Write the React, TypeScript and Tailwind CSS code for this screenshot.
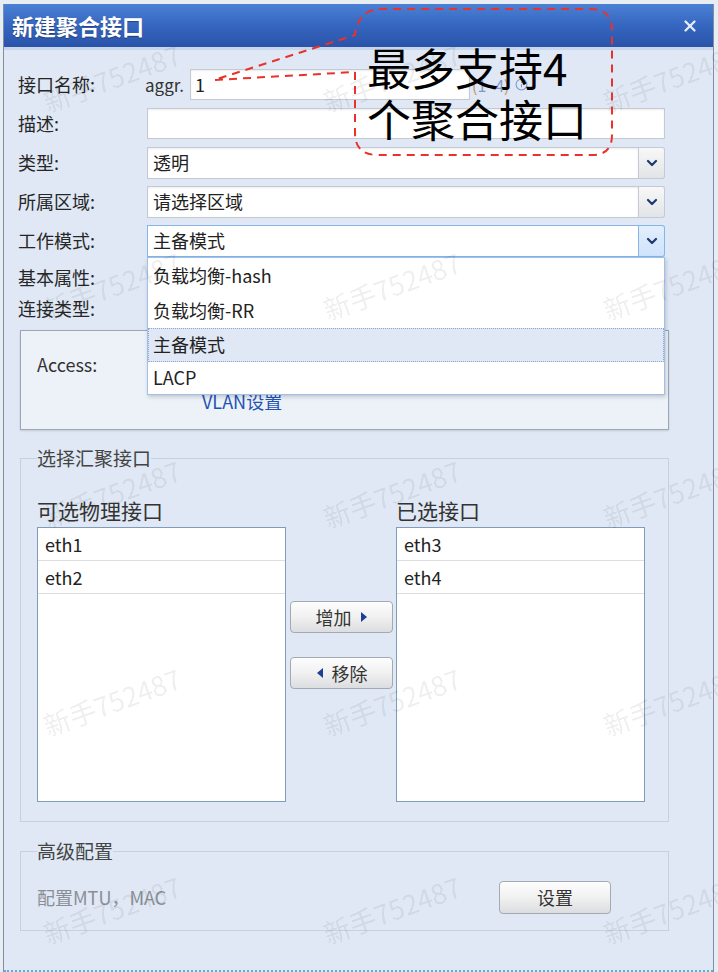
import { ChevronDown, X, Info } from "lucide-react";
import type { ReactNode } from "react";

const watermarks = Array.from({ length: 15 }, (_, i) => i);

function Label({ children }: { children: ReactNode }) {
  return <span className="w-[129px] shrink-0 text-[18px] text-[#262626]">{children}</span>;
}

function Select({ value, active = false }: { value: string; active?: boolean }) {
  return (
    <div className="flex h-[32px] w-[518px]">
      <div
        className={
          active
            ? "flex flex-1 items-center border border-[#86b5e9] bg-white pl-[5px] text-[18px] text-[#222]"
            : "flex flex-1 items-center border border-[#c3cad3] bg-white pl-[5px] text-[18px] text-[#222] shadow-[inset_0_1px_2px_rgba(0,0,0,0.08)]"
        }
      >
        {value}
      </div>
      <div
        className={
          active
            ? "flex w-[26px] items-center justify-center rounded-r-[3px] border border-l-0 border-[#86b5e9] bg-gradient-to-b from-[#e2effd] to-[#cfe3fa]"
            : "flex w-[26px] items-center justify-center rounded-r-[3px] border border-l-0 border-[#c3cad3] bg-gradient-to-b from-[#f8f8f8] to-[#e2e4e7]"
        }
      >
        <ChevronDown size={16} strokeWidth={3.4} className="text-[#1f3a72]" />
      </div>
    </div>
  );
}

function Tri({ dir }: { dir: "left" | "right" }) {
  return (
    <svg width="8" height="12" viewBox="0 0 8 12">
      <polygon points={dir === "right" ? "1,1 7,6 1,11" : "7,1 1,6 7,11"} fill="#1d3f95" />
    </svg>
  );
}

function Btn({ children, className }: { children: ReactNode; className: string }) {
  return (
    <button
      className={
        "flex items-center justify-center gap-[8px] rounded-[4px] border border-[#a4aab3] bg-gradient-to-b from-[#fdfdfd] via-[#f1f1f1] to-[#dcdde0] text-[18px] text-[#333] shadow-[inset_0_1px_0_#ffffff] " +
        className
      }
    >
      {children}
    </button>
  );
}

function ListBox({ items }: { items: string[] }) {
  return (
    <div className="h-[275px] w-[249px] border border-[#7f9cba] bg-white">
      {items.map((it) => (
        <div key={it} className="flex h-[33px] items-center border-b border-[#dedede] pl-[7px] text-[18px] text-[#222]">
          {it}
        </div>
      ))}
    </div>
  );
}

export default function App() {
  return (
    <div className="relative h-[972px] w-[718px] overflow-hidden bg-[#e8edf3] pl-[3px] pt-[4px] font-['Noto_Sans_CJK_SC','Noto_Sans',sans-serif]">
      <div className="flex h-[968px] w-[711px] flex-col border-x border-[#7d8ea9] bg-[#dfe8f4]">
        {/* title bar */}
        <div className="flex h-[43px] shrink-0 items-center justify-between bg-gradient-to-b from-[#4c80d5] via-[#3566c0] to-[#2a53a9] pl-[8px] pr-[14px]">
          <span className="text-[22px] font-bold text-white [text-shadow:0_1px_1px_rgba(0,0,0,0.35)]">新建聚合接口</span>
          <X size={18} strokeWidth={3} className="text-[#e6edf8]" />
        </div>
        <div className="h-[3px] shrink-0 bg-[#c7d6ea]" />

        {/* form rows */}
        <div className="flex flex-col pl-[14px] pt-[15px]">
          <div className="flex h-[39px] items-center">
            <Label>接口名称:</Label>
            <span className="-ml-[2px] w-[45px] text-[17px] text-[#333]">aggr.</span>
            <div className="flex h-[31px] w-[280px] items-center border border-[#c3cad3] bg-white pl-[4px] text-[18px] text-[#222] shadow-[inset_0_1px_2px_rgba(0,0,0,0.08)]">
              1
            </div>
            <span className="ml-[2px] text-[16px] text-[#7f98cc]">
              <span className="text-[#c9955c]">(</span>1~4<span className="text-[#c9955c]">)</span>
            </span>
            <Info size={13} strokeWidth={2} className="ml-[6px] text-[#7d9bd2]" />
          </div>
          <div className="flex h-[39px] items-center">
            <Label>描述:</Label>
            <div className="h-[31px] w-[518px] border border-[#c3cad3] bg-white shadow-[inset_0_1px_2px_rgba(0,0,0,0.08)]" />
          </div>
          <div className="flex h-[39px] items-center">
            <Label>类型:</Label>
            <Select value="透明" />
          </div>
          <div className="flex h-[39px] items-center">
            <Label>所属区域:</Label>
            <Select value="请选择区域" />
          </div>
          <div className="relative z-20 flex h-[39px] items-center">
            <Label>工作模式:</Label>
            <div className="relative">
              <Select value="主备模式" active />
              <div className="absolute left-0 top-full w-[518px] border border-[#9ec0ea] bg-white shadow-[1px_2px_4px_rgba(0,0,0,0.18)]">
                <div className="flex h-[35px] items-center pl-[5px] text-[18px] text-[#222]">负载均衡-hash</div>
                <div className="flex h-[35px] items-center pl-[5px] text-[18px] text-[#222]">负载均衡-RR</div>
                <div className="flex h-[34px] items-center border border-dotted border-[#8ea6d2] bg-[#dfe8f4] pl-[4px] text-[18px] text-[#222]">
                  主备模式
                </div>
                <div className="flex h-[32px] items-center pl-[5px] text-[18px] text-[#222]">LACP</div>
              </div>
            </div>
          </div>
          <div className="flex h-[34px] items-center">
            <Label>基本属性:</Label>
          </div>
          <div className="flex h-[28px] items-center">
            <Label>连接类型:</Label>
          </div>
        </div>

        {/* access panel */}
        <div className="ml-[16px] mt-[8px] h-[100px] w-[649px] shrink-0 border border-[#9da6b3] bg-[#edf2f9] shadow-[0_1px_2px_rgba(0,0,0,0.12)]">
          <div className="mt-[21px] flex h-[24px] items-center pl-[16px] text-[18px] text-[#333]">Access:</div>
          <div className="mt-[13px] flex h-[24px] items-center pl-[181px] text-[18px] text-[#2452b4]">VLAN设置</div>
        </div>

        {/* aggregate ports */}
        <fieldset className="ml-[16px] mt-[16px] w-[649px] shrink-0 border border-[#c6d1df] pb-[19px] pl-[16px]">
          <legend className="h-[24px] text-[19px] leading-[24px] text-[#444]">选择汇聚接口</legend>
          <div className="flex pt-[26px]">
            <div className="flex flex-col">
              <div className="h-[28px] text-[21px] leading-[28px] text-[#333]">可选物理接口</div>
              <div className="mt-[3px]">
                <ListBox items={["eth1", "eth2"]} />
              </div>
            </div>
            <div className="ml-[4px] flex w-[103px] flex-col gap-[24px] pt-[105px]">
              <Btn className="h-[32px] w-[103px]">
                增加 <Tri dir="right" />
              </Btn>
              <Btn className="h-[32px] w-[103px]">
                <Tri dir="left" /> 移除
              </Btn>
            </div>
            <div className="ml-[3px] flex flex-col">
              <div className="h-[28px] text-[21px] leading-[28px] text-[#333]">已选接口</div>
              <div className="mt-[3px]">
                <ListBox items={["eth3", "eth4"]} />
              </div>
            </div>
          </div>
        </fieldset>

        {/* advanced */}
        <fieldset className="ml-[16px] mt-[17px] w-[649px] shrink-0 border border-[#c6d1df] pb-[16px] pl-[16px]">
          <legend className="h-[24px] text-[19px] leading-[24px] text-[#444]">高级配置</legend>
          <div className="mt-[18px] flex h-[33px] items-center justify-between pr-[57px]">
            <span className="text-[18px] text-[#8a8f96]">配置MTU，MAC</span>
            <Btn className="h-[33px] w-[112px]">设置</Btn>
          </div>
        </fieldset>

        <div className="mt-auto h-[2px] border-b-2 border-dotted border-[#5fb0cf]" />
      </div>

      {/* watermark */}
      <div className="pointer-events-none absolute left-[-28px] top-[-26px] z-30 grid grid-cols-[repeat(3,280px)] grid-rows-[repeat(5,208px)] place-items-center">
        {watermarks.map((i) => (
          <span key={i} className="-rotate-[20deg] whitespace-nowrap text-[27px] text-[rgba(0,0,0,0.08)]">
            新手752487
          </span>
        ))}
      </div>

      {/* annotation */}
      <svg className="pointer-events-none absolute left-0 top-0 z-40" width="718" height="972" viewBox="0 0 718 972">
        <path
          d="M355 72 L355 133 Q355 155 378 155 L592 155 Q612 155 612 135 L612 30 Q612 9 590 9 L382 9 Q358 9 355 35 L214 80 L355 72"
          fill="none"
          stroke="#e8322b"
          strokeWidth="2"
          strokeDasharray="8 6"
        />
      </svg>
      <div className="pointer-events-none absolute left-[367px] top-[42px] z-40 text-[44px] leading-[51px] text-black">
        <div>最多支持4</div>
        <div>个聚合接口</div>
      </div>
    </div>
  );
}
